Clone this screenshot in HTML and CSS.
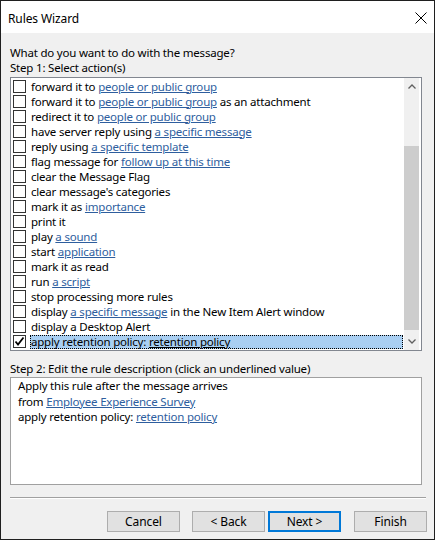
FILE: index.html
```html
<!DOCTYPE html>
<html>
<head>
<meta charset="utf-8">
<link rel="stylesheet" href="styles.css">
</head>
<body>
<div class="window">
  <div class="titlebar">
    <span class="title">Rules Wizard</span>
    <svg class="close" width="12" height="12" viewBox="0 0 12 12"><path d="M0.5 0.5 L11.5 11.5 M11.5 0.5 L0.5 11.5" stroke="#000" stroke-width="1" fill="none"/></svg>
  </div>
  <div class="content">
    <div class="label">What do you want to do with the message?</div>
    <div class="label">Step 1: Select action(s)</div>
    <div class="listbox">
      <div class="items">
        <div class="item"><span class="cb"></span><span class="txt">forward it to <a>people or public group</a></span></div>
        <div class="item"><span class="cb"></span><span class="txt">forward it to <a>people or public group</a> as an attachment</span></div>
        <div class="item"><span class="cb"></span><span class="txt">redirect it to <a>people or public group</a></span></div>
        <div class="item"><span class="cb"></span><span class="txt">have server reply using <a>a specific message</a></span></div>
        <div class="item"><span class="cb"></span><span class="txt">reply using <a>a specific template</a></span></div>
        <div class="item"><span class="cb"></span><span class="txt">flag message for <a>follow up at this time</a></span></div>
        <div class="item"><span class="cb"></span><span class="txt">clear the Message Flag</span></div>
        <div class="item"><span class="cb"></span><span class="txt">clear message's categories</span></div>
        <div class="item"><span class="cb"></span><span class="txt">mark it as <a>importance</a></span></div>
        <div class="item"><span class="cb"></span><span class="txt">print it</span></div>
        <div class="item"><span class="cb"></span><span class="txt">play <a>a sound</a></span></div>
        <div class="item"><span class="cb"></span><span class="txt">start <a>application</a></span></div>
        <div class="item"><span class="cb"></span><span class="txt">mark it as read</span></div>
        <div class="item"><span class="cb"></span><span class="txt">run <a>a script</a></span></div>
        <div class="item"><span class="cb"></span><span class="txt">stop processing more rules</span></div>
        <div class="item"><span class="cb"></span><span class="txt">display <a>a specific message</a> in the New Item Alert window</span></div>
        <div class="item"><span class="cb"></span><span class="txt">display a Desktop Alert</span></div>
        <div class="item selected"><span class="cb checked"><svg width="11" height="11" viewBox="0 0 11 11"><path d="M1.5 5.5 L4 8.5 L9.5 1.5" stroke="#000" stroke-width="1.8" fill="none"/></svg></span><span class="txt">apply retention policy: <a>retention policy</a></span></div>
      </div>
      <div class="scrollbar">
        <div class="arrow"><svg width="8" height="5" viewBox="0 0 8 5"><path d="M0.5 4.5 L4 1 L7.5 4.5" stroke="#606060" stroke-width="1.3" fill="none"/></svg></div>
        <div class="track"><div class="thumb"></div></div>
        <div class="arrow"><svg width="8" height="5" viewBox="0 0 8 5"><path d="M0.5 0.5 L4 4 L7.5 0.5" stroke="#606060" stroke-width="1.3" fill="none"/></svg></div>
      </div>
    </div>
    <div class="label step2">Step 2: Edit the rule description (click an underlined value)</div>
    <div class="desc">
      <div>Apply this rule after the message arrives</div>
      <div>from <a>Employee Experience Survey</a></div>
      <div>apply retention policy: <a>retention policy</a></div>
    </div>
    <div class="sep"></div>
    <div class="buttons">
      <button class="btn">Cancel</button>
      <button class="btn back">&lt; Back</button>
      <button class="btn default">Next &gt;</button>
      <button class="btn finish">Finish</button>
    </div>
  </div>
</div>
</body>
</html>
```
FILE: styles.css
```css
* { box-sizing: border-box; }
body {
  margin: 0;
  font-family: "Noto Sans", "Open Sans", sans-serif;
  font-size: 11.5px;
  letter-spacing: -0.2px;
  color: #000;
}
.window {
  width: 435px;
  height: 540px;
  border: 1px solid #1f1f1f;
  display: flex;
  flex-direction: column;
  background: #f0f0f0;
}
.titlebar {
  height: 32px;
  background: #fff;
  display: flex;
  align-items: center;
  justify-content: space-between;
  padding: 0 7px 0 7px;
  flex: none;
}
.title { font-size: 12px; letter-spacing: -0.1px; margin-top: 3px; }
.close { margin-top: 2px; }
.content {
  flex: 1;
  padding: 12px 0 0 9px;
  display: flex;
  flex-direction: column;
}
.label { height: 15px; line-height: 15px; }
.listbox {
  margin-top: 2px;
  width: 412px;
  height: 274px;
  border: 1px solid #828790;
  background: #fff;
  display: flex;
  padding-right: 2px;
}
.items {
  flex: 1;
  padding-top: 1px;
}
.item {
  height: 15px;
  display: flex;
  align-items: center;
  padding-left: 2px;
}
.cb {
  width: 13px;
  height: 13px;
  border: 1px solid #333;
  background: #fff;
  flex: none;
  display: flex;
  align-items: center;
  justify-content: center;
}
.txt {
  margin-left: 4px;
  padding: 0 1px;
  line-height: 14px;
  height: 14px;
  white-space: nowrap;
}
.item.selected .txt {
  flex: 1;
  background: #a9cff2;
  outline: 1px dotted #000;
  outline-offset: -1px;
  margin-right: 1px;
}
a {
  color: #2e5e9e;
  text-decoration: underline;
}
.item.selected a { color: #000; }
.scrollbar {
  width: 15px;
  background: #f0f0f0;
  display: flex;
  flex-direction: column;
}
.arrow {
  height: 17px;
  display: flex;
  align-items: center;
  justify-content: center;
}
.track {
  flex: 1;
  display: flex;
  flex-direction: column;
}
.thumb {
  margin-top: 51px;
  height: 184px;
  background: #cdcdcd;
}
.step2 { margin-top: 10px; }
.desc {
  margin-top: 1px;
  width: 412px;
  height: 108px;
  border: 1px solid #a0a0a0;
  background: #fff;
  padding: 0 7px;
  line-height: 15.5px;
}
.sep {
  margin-top: 12px;
  width: 416px;
  height: 2px;
  border-top: 1px solid #a0a0a0;
  border-bottom: 1px solid #fff;
}
.buttons {
  margin-top: 12px;
  display: flex;
  padding-left: 97px;
}
.btn {
  width: 73px;
  height: 21px;
  font-family: inherit;
  font-size: 12px;
  letter-spacing: -0.1px;
  background: #e1e1e1;
  border: 1px solid #adadad;
  padding: 0;
  color: #000;
}
.back { margin-left: 12px; }
.default { margin-left: 3px; border: 2px solid #0078d7; }
.finish { margin-left: 13px; }
```
